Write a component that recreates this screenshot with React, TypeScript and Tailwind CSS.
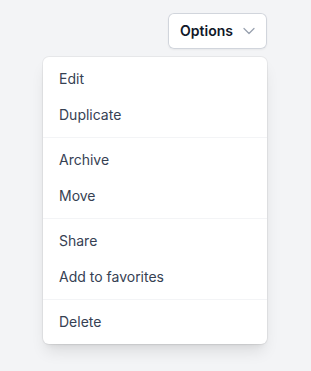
import React from "react";
import { ChevronDown } from "lucide-react";

const groups: string[][] = [
  ["Edit", "Duplicate"],
  ["Archive", "Move"],
  ["Share", "Add to favorites"],
  ["Delete"],
];

const App = () => {
  return (
    <div
      className="min-h-screen bg-gray-100 pt-[13px] pl-[43px]"
      style={{ fontFamily: "Inter, 'Noto Sans', sans-serif" }}
    >
      <div className="flex w-56 justify-end">
        <div className="relative inline-block text-left">
          {/* Trigger */}
          <button className="inline-flex items-center gap-x-1.5 rounded-md bg-white px-3 py-2 text-sm font-semibold text-gray-900 shadow-xs ring-1 ring-inset ring-gray-300">
            Options
            <ChevronDown className="-mr-1 h-5 w-5 text-gray-400" strokeWidth={1.5} />
          </button>

          {/* Menu */}
          <div className="absolute right-0 z-10 mt-2 w-56 divide-y divide-gray-100 rounded-md bg-white shadow-lg ring-1 ring-black/5">
            {groups.map((group, i) => (
              <div key={i} className="py-1">
                {group.map((item) => (
                  <a key={item} href="#" className="block px-4 py-2 text-sm text-gray-700">
                    {item}
                  </a>
                ))}
              </div>
            ))}
          </div>
        </div>
      </div>
    </div>
  );
};

export default App;
